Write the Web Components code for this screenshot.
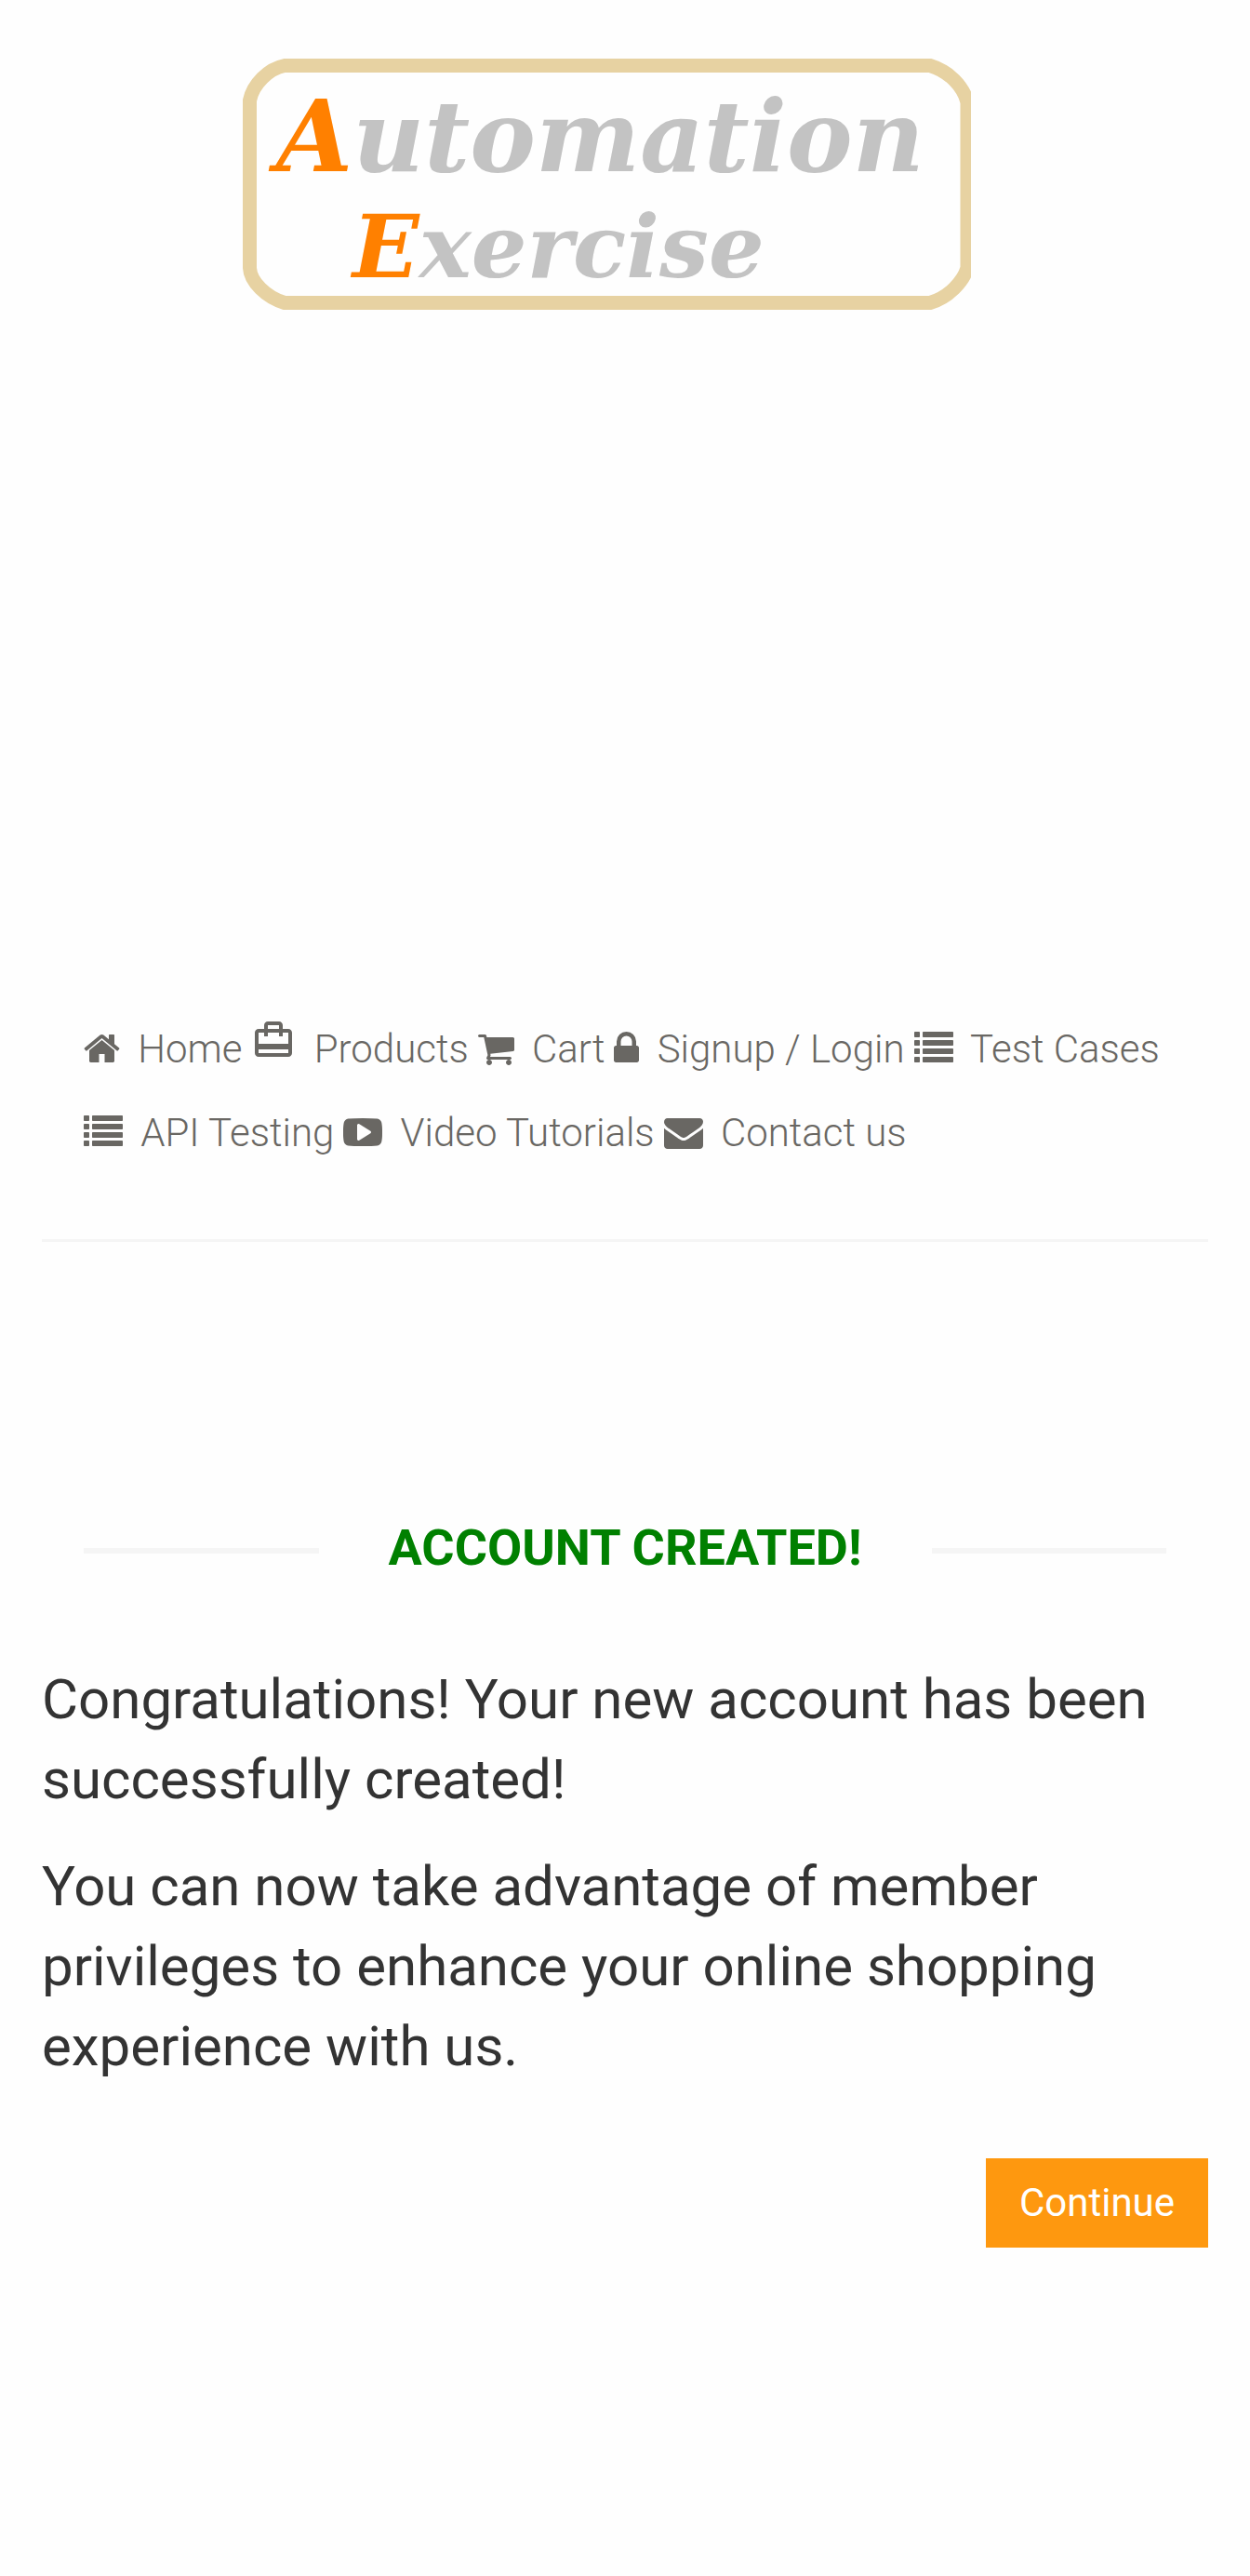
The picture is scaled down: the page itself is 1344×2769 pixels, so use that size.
<!DOCTYPE html>
<html lang="en">
<head>
<meta charset="utf-8">
<meta name="viewport" content="width=device-width, initial-scale=1">
<title>Automation Exercise - Account Created</title>
<style>
  body { margin: 0; background: #fefefe; color: #333; font-family: Roboto, sans-serif; }
</style>
</head>
<body>
<site-page>
  <site-header slot="header">
    <site-logo slot="logo"></site-logo>
    <nav-item icon="home">Home</nav-item>
    <nav-item icon="bag">Products</nav-item>
    <nav-item icon="cart">Cart</nav-item>
    <nav-item icon="lock">Signup / Login</nav-item>
    <nav-item icon="list">Test Cases</nav-item>
    <nav-item icon="list">API Testing</nav-item>
    <nav-item icon="video">Video Tutorials</nav-item>
    <nav-item icon="mail">Contact us</nav-item>
  </site-header>
  <account-message>
    <section-title slot="title">Account Created!</section-title>
    <p>Congratulations! Your new account has been successfully created!</p>
    <p>You can now take advantage of member privileges to enhance your online shopping experience with us.</p>
    <primary-link slot="action">Continue</primary-link>
  </account-message>
</site-page>

<script>
  const define = (name, html, setup) => customElements.define(name, class extends HTMLElement {
    constructor() {
      super();
      this.attachShadow({ mode: 'open' }).innerHTML = html;
    }
    connectedCallback() { if (setup) setup(this, this.shadowRoot); }
  });

  const rows = [128, 512, 896, 1280]
    .map(y => `<rect y="${y}" width="256" height="256" rx="32"/><rect x="384" y="${y}" width="1408" height="256" rx="32"/>`)
    .join('');

  // Each icon: drawn width, viewBox, shapes
  const icons = {
    home: [39, '64 0 1664 1792', '<path d="M1472 992v480q0 26-19 45t-45 19h-384v-384h-256v384h-384q-26 0-45-19t-19-45v-480q0-1 .5-3t.5-3l575-474 575 474q1 2 1 6zm223-69l-62 74q-8 9-21 11h-3q-13 0-21-7l-692-577-692 577q-12 8-24 7-13-2-21-11l-62-74q-8-10-7-23.5t11-21.5l719-599q32-26 76-26t76 26l244 204v-195q0-14 9-23t23-9h192q14 0 23 9t9 23v408l219 182q10 8 11 21.5t-7 23.5z"/>'],
    bag: [48, '0 0 24 24', '<path d="M20 6h-3V4c0-1.110-.89-2-2-2H9c-1.110 0-2 .89-2 2v2H4c-1.110 0-2 .89-2 2v11c0 1.110.89 2 2 2h16c1.110 0 2-.89 2-2V8c0-1.110-.89-2-2-2zM9 4h6v2H9V4zm11 15H4v-2h16v2zm0-5H4V8h3v2h2V8h6v2h2V8h3v6z"/>'],
    cart: [39, '64 0 1664 1792', '<path d="M704 1536q0 52-38 90t-90 38-90-38-38-90 38-90 90-38 90 38 38 90zm896 0q0 52-38 90t-90 38-90-38-38-90 38-90 90-38 90 38 38 90zm128-1088v512q0 24-16.5 42.5t-40.5 21.5l-1044 122q13 60 13 70 0 16-24 64h920q26 0 45 19t19 45-19 45-45 19h-1024q-26 0-45-19t-19-45q0-11 8-31.5t16-36 21.5-40 15.5-29.5l-177-823h-204q-26 0-45-19t-19-45 19-45 45-19h256q16 0 28.5 6.5t19.5 15.5 13 24.5 8 26 5.500 29.500 4.500 26h1201q26 0 45 19t19 45z"/>'],
    lock: [27, '0 0 1152 1792', '<path d="M320 768h512v-192q0-106-75-181t-181-75-181 75-75 181v192zm832 96v576q0 40-28 68t-68 28h-960q-40 0-68-28t-28-68v-576q0-40 28-68t68-28h32v-192q0-184 132-316t316-132 316 132 132 316v192h32q40 0 68 28t28 68z"/>'],
    list: [42, '0 0 1792 1792', rows],
    video: [42, '0 0 1792 1792', '<path d="M1280 896q0-37-30-54l-512-320q-31-20-65-2-33 18-33 56v640q0 38 33 56 16 8 31 8 20 0 34-10l512-320q30-17 30-54zm512 0q0 96-1 150t-8.500 136.500-22.500 147.500q-16 73-69 123t-124 58q-222 25-671 25t-671-25q-71-8-124.500-58t-69.500-123q-14-65-21.500-147.500t-8.500-136.500-1-150 1-150 8.500-136.500 22.500-147.500q16-73 69-123t124-58q222-25 671-25t671 25q71 8 124.500 58t69.500 123q14 65 21.500 147.500t8.500 136.500 1 150z"/>'],
    mail: [42, '0 0 1792 1792', '<path d="M1792 710v794q0 66-47 113t-113 47h-1472q-66 0-113-47t-47-113v-794q44 49 101 87 362 246 497 345 57 42 92.500 65.500t94.500 48 110 24.500h2q51 0 110-24.500t94.500-48 92.500-65.500q170-123 498-345 57-39 100-87zm0-294q0 79-49 151t-122 123q-376 261-468 325-10 7-42.500 31t-54 38.500-52 32.500-57.500 27-50 9h-2q-23 0-50-9t-57.500-27-52-32.500-54-38.500-42.500-31q-91-64-262-182.500t-205-142.500q-62-42-117-115.500t-55-136.500q0-78 41.500-130t118.500-52h1472q65 0 112.500 47t47.500 113z"/>']
  };

  define('site-page', `
    <style>
      :host { display: flex; flex-direction: column; padding: 0 45px; }
      main { padding-bottom: 353px; }
    </style>
    <slot name="header"></slot>
    <main><slot></slot></main>`);

  define('site-header', `
    <style>
      :host { display: block; }
      header { border-bottom: 3px solid #f5f5f5; padding: 63px 0 69px; }
      .brand { display: flex; justify-content: center; padding-right: 39px; margin-bottom: 750px; }
      nav { display: flex; flex-wrap: wrap; column-gap: 10px; padding: 0 45px; }
    </style>
    <header>
      <div class="brand"><slot name="logo"></slot></div>
      <nav aria-label="Main"><slot></slot></nav>
    </header>`);

  define('site-logo', `
    <style>
      :host { display: block; }
      a, svg { display: block; }
      text { font-family: "DejaVu Serif", serif; font-style: italic; font-weight: 700; fill: #c3c3c3; }
      .initial { fill: #ff8000; }
    </style>
    <a href="#" aria-label="Automation Exercise">
      <svg width="783" height="270" viewBox="0 0 783 270">
        <path fill="none" stroke="#e7d2a2" stroke-width="15" d="M45 7.500H739Q754 12 765 23T779 47V225Q776 236 765 247T739 262.500H45Q30 258 19 247T7.500 225V45Q10 32 21 21T45 7.500Z"/>
        <text x="36" y="121" font-size="106"><tspan class="initial">A</tspan>utomation</text>
        <text x="118" y="235" font-size="94"><tspan class="initial">E</tspan>xercise</text>
      </svg>
    </a>`);

  define('nav-item', `
    <style>
      :host { display: block; }
      a { display: block; color: #696763; font-size: 42px; font-weight: 300; line-height: 90px; text-decoration: none; white-space: nowrap; }
      svg { fill: currentColor; height: 42px; margin-right: 9px; vertical-align: -6px; }
      svg.bag { height: 48px; vertical-align: baseline; }
    </style>
    <a href="#"><span></span> <slot></slot></a>`,
    (el, root) => {
      const name = el.getAttribute('icon');
      const [width, box, shapes] = icons[name];
      root.querySelector('span').innerHTML =
        `<svg class="${name}" width="${width}" viewBox="${box}" aria-hidden="true">${shapes}</svg>`;
    });

  define('account-message', `
    <style>
      :host { display: flex; flex-direction: column; padding-top: 299px; }
      .text { display: flex; flex-direction: column; gap: 29px; margin: 84px 0 77px; }
      ::slotted(p) { margin: 0; font-size: 60px; line-height: 86px; }
      .action { display: flex; justify-content: flex-end; }
    </style>
    <slot name="title"></slot>
    <div class="text"><slot></slot></div>
    <div class="action"><slot name="action"></slot></div>`);

  define('section-title', `
    <style>
      :host { display: block; padding: 0 45px; }
      h2 { display: flex; align-items: center; gap: 75px; margin: 0; color: green; font-size: 54px; font-weight: 700; line-height: 60px; text-transform: uppercase; }
      h2::before, h2::after { content: ""; flex: 1; height: 6px; background: #f5f5f5; }
      span { padding-bottom: 6px; }
    </style>
    <h2><span><slot></slot></span></h2>`);

  define('primary-link', `
    <style>
      :host { display: block; }
      a { display: block; padding: 18px 36px; background: #fe980f; color: #fff; font-size: 42px; line-height: 60px; text-decoration: none; }
    </style>
    <a href="#"><slot></slot></a>`);
</script>
</body>
</html>
